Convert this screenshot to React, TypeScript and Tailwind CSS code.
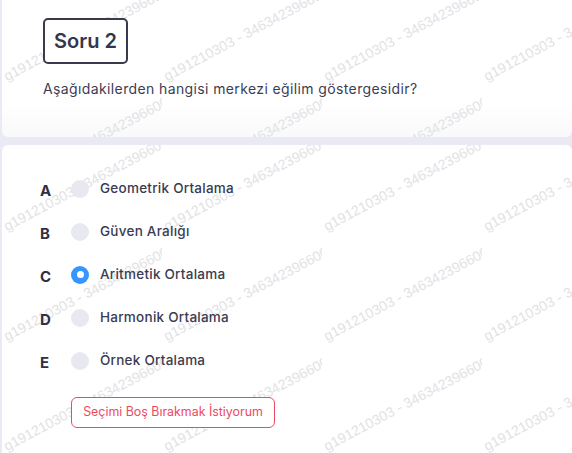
import React from "react";

const WM = "g191210303 - 3463423966000000";

function Watermark({ top }: { top: number }) {
  const cols = [0, 1, 2, 3];
  const rows = [-1, 0, 1, 2, 3];
  return (
    <div className="pointer-events-none absolute inset-0 overflow-hidden">
      {cols.map((c) => (
        <div
          key={c}
          className="absolute top-0 bottom-0 w-[160px] overflow-hidden"
          style={{ left: c * 160 }}
        >
          {rows.map((r) => (
            <span
              key={r}
              className="absolute left-[6px] origin-bottom-left -rotate-[28deg] whitespace-nowrap text-[14px] leading-[14px] text-[#e2e2e5]"
              style={{ top: top + r * 110, fontFamily: '"Liberation Sans", Arial, sans-serif' }}
            >
              {WM}
            </span>
          ))}
        </div>
      ))}
    </div>
  );
}

const options = [
  { l: "A", t: "Geometrik Ortalama" },
  { l: "B", t: "Güven Aralığı" },
  { l: "C", t: "Aritmetik Ortalama", sel: true },
  { l: "D", t: "Harmonik Ortalama" },
  { l: "E", t: "Örnek Ortalama" },
];

export default function App() {
  return (
    <div
      className="h-[453px] w-[572px] overflow-hidden bg-[#e9eaf3] pl-[2px]"
      style={{ fontFamily: 'Inter, "Noto Sans", sans-serif' }}
    >
      <div className="relative h-[137px] overflow-hidden rounded-b-[6px] bg-gradient-to-b from-white from-75% to-[#f9f9fb]">
        <Watermark top={69} />
        <div className="relative px-[41px] pt-[18px]">
          <div className="inline-flex h-[46px] w-[85px] items-center justify-center rounded-[5px] border-2 border-[#393a4c] bg-white">
            <span className="text-[20px] font-semibold text-[#35364a]">Soru 2</span>
          </div>
          <p className="mt-[14px] text-[14px] tracking-[0.38px] text-[#3c3d55]">
            Aşağıdakilerden hangisi merkezi eğilim göstergesidir?
          </p>
        </div>
      </div>
      <div className="relative mt-[8px] h-[320px] overflow-hidden rounded-t-[6px] bg-white">
        <Watermark top={74} />
        <div className="relative pt-[22px]">
          {options.map((o) => (
            <div key={o.l} className="flex h-[43px] items-center">
              <span className="w-[31px] pl-[38px] box-content translate-y-[3px] text-[15px] font-bold text-[#2f3045]">
                {o.l}
              </span>
              {o.sel ? (
                <span className="flex h-[18px] w-[18px] items-center justify-center rounded-full bg-[#3596ff]">
                  <span className="h-[7px] w-[7px] rounded-full bg-white" />
                </span>
              ) : (
                <span className="h-[18px] w-[18px] rounded-full bg-[#e8e9f0]" />
              )}
              <span className="ml-[11px] text-[13.5px] tracking-[0.25px] font-medium text-[#3a3b52]">{o.t}</span>
            </div>
          ))}
          <div className="mt-[15px] pl-[69px]">
            <button className="h-[31px] w-[204px] rounded-[6px] border border-[#f0495f] bg-white text-[12.4px] text-[#ee4a5f]">
              Seçimi Boş Bırakmak İstiyorum
            </button>
          </div>
        </div>
      </div>
    </div>
  );
}
